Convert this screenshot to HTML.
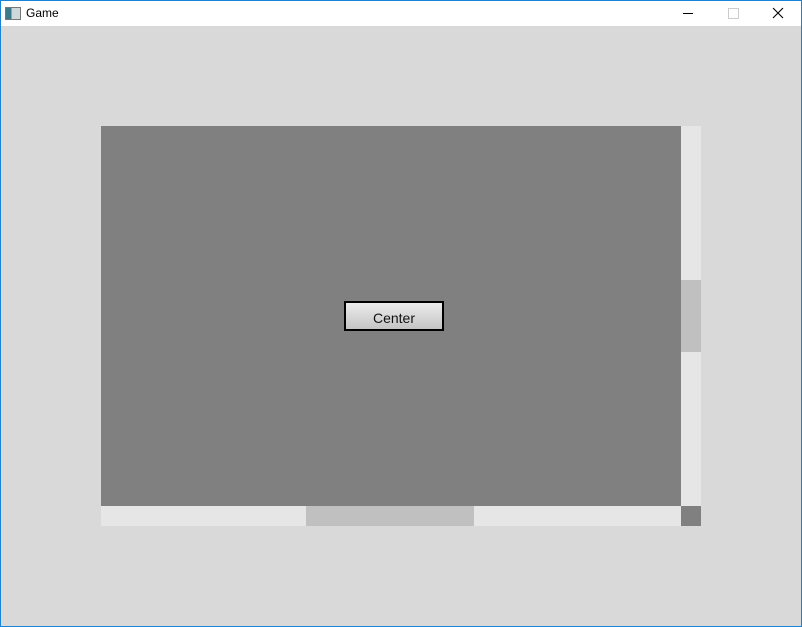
<!DOCTYPE html>
<html><head><style>
body{margin:0;width:802px;height:627px;overflow:hidden;font-family:"Liberation Sans",sans-serif}
#w{position:absolute;left:0;top:0;width:800px;height:625px;border:1px solid #1883d7;background:#d9d9d9}
#t{position:absolute;left:0;top:0;width:800px;height:25px;background:#fff}
.a{position:absolute}
</style></head><body>
<div id="w">
<div id="t">
 <div class="a" style="left:4px;top:6px;width:14px;height:11px;border:1px solid #777;background:linear-gradient(90deg,#3a7a8a 40%,#cfd8da 40%)"></div>
 <div class="a" style="left:25px;top:5px;font-size:12px;color:#000">Game</div>
 <div class="a" style="left:682px;top:12px;width:10px;height:1px;background:#000"></div>
 <div class="a" style="left:727px;top:7px;width:9px;height:9px;border:1px solid #ccc"></div>
 <svg class="a" style="left:771px;top:6px" width="12" height="12"><path d="M1 1L11 11M11 1L1 11" stroke="#000" stroke-width="1.1"/></svg>
</div>
<div class="a" style="left:100px;top:125px;width:580px;height:380px;background:#808080"></div>
<div class="a" style="left:680px;top:125px;width:20px;height:380px;background:#e6e6e6"></div>
<div class="a" style="left:680px;top:279px;width:20px;height:72px;background:#c0c0c0"></div>
<div class="a" style="left:100px;top:505px;width:580px;height:20px;background:#e6e6e6"></div>
<div class="a" style="left:305px;top:505px;width:168px;height:20px;background:#c0c0c0"></div>
<div class="a" style="left:680px;top:505px;width:20px;height:20px;background:#808080"></div>
<div class="a" style="left:343px;top:300px;width:96px;height:26px;border:2px solid #000;background:linear-gradient(#ececec,#c4c4c4);font-size:14px;text-align:center;line-height:31px;color:#111">Center</div>
</div>
</body></html>
